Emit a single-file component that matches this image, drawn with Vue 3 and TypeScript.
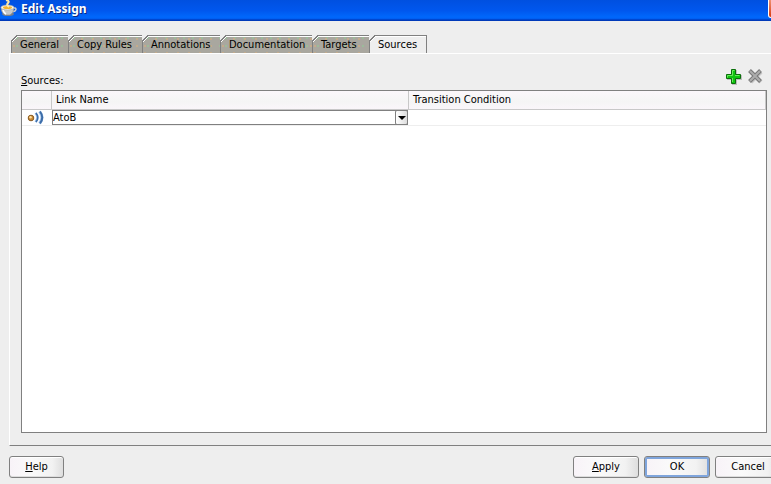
<script setup lang="ts">
import { ref } from 'vue'

const tabs: string[] = ['General', 'Copy Rules', 'Annotations', 'Documentation', 'Targets', 'Sources']
const active = ref('Sources')
const linkName = ref('AtoB')
</script>

<template>
  <div class="viewport">
    <main class="dialog">
      <header class="titlebar">
        <svg class="cup" width="17" height="17" viewBox="0 0 17 17" aria-hidden="true">
          <ellipse cx="8" cy="14" rx="6" ry="2" fill="#777d86" />
          <path d="M13 8h2q2 1 0 3l-3 1" fill="none" stroke="#c9ccd0" stroke-width="1.500" />
          <path d="M1 7h13q0 6-4 8H5Q1 13 1 7z" fill="#c5c8ca" stroke="#85888c" stroke-width=".6" />
          <path d="M3 10q1 3 3 4" stroke="#fff" stroke-width="1.500" fill="none" />
          <ellipse cx="7.500" cy="7.500" rx="6.500" ry="2.500" fill="#f3f3f0" stroke="#a9a9a3" stroke-width=".6" />
          <ellipse cx="7.500" cy="7.500" rx="4.500" ry="1.500" fill="#f2b330" />
          <path d="M6 0q4 1 2 3t1 4" fill="none" stroke="#ffe9a8" stroke-width="2" />
        </svg>
        <h1>Edit Assign</h1>
        <button class="close" type="button" aria-label="Close"></button>
      </header>

      <div class="tabs" role="tablist">
        <button
          v-for="tab in tabs"
          :key="tab"
          type="button"
          role="tab"
          class="tab"
          :class="{ active: tab === active }"
          :aria-selected="tab === active"
          @click="active = tab"
        >{{ tab }}</button>
      </div>

      <section class="panel" role="tabpanel">
        <div class="toolbar">
          <span id="sources-label" class="caption"><u>S</u>ources:</span>
          <button class="tool" type="button" aria-label="Add">
            <svg width="17" height="17" viewBox="0 0 17 17">
              <path d="M7 2h5v5h5v5h-5v5H7v-5H2V7h5z" fill="#bdbdbd" />
              <path d="M6.500 1.500h4v5h5v4h-5v5h-4v-5h-5v-4h5z" fill="#10c410" stroke="#0a6e0a" stroke-linejoin="round" />
              <path d="M7.500 14V10M2.500 9.500V7.500H7.500V2.500H9.500M10 7.500h4.500" fill="none" stroke="#6bea5c" />
            </svg>
          </button>
          <button class="tool" type="button" aria-label="Delete">
            <svg width="17" height="17" viewBox="0 0 17 17">
              <path d="M4 4l10 10M14 4L4 14" stroke="#c9c9c9" stroke-width="4" />
              <path d="M2.500 2.500l11 11M13.500 2.500l-11 11" stroke="#777" stroke-width="4" />
              <path d="M3 3l10 10M13 3L3 13" stroke="#acacac" stroke-width="2" />
            </svg>
          </button>
        </div>

        <div class="table-box">
          <table aria-labelledby="sources-label">
            <colgroup>
              <col class="col-icon" />
              <col />
              <col />
            </colgroup>
            <thead>
              <tr>
                <th></th>
                <th>Link Name</th>
                <th>Transition Condition</th>
              </tr>
            </thead>
            <tbody>
              <tr>
                <td class="icon-cell">
                  <svg width="18" height="15" viewBox="0 0 18 15" aria-hidden="true">
                    <path d="M8.500 3q4 4.500 0 9" fill="none" stroke="#9dbfe8" stroke-width="2.500" />
                    <path d="M9 3q3.500 4.500 0 9" fill="none" stroke="#3d6da8" stroke-width="1.500" />
                    <path d="M12.500 1.500q5 6 0 12" fill="none" stroke="#a9c8ec" stroke-width="3" />
                    <path d="M13 1.500q4.500 6 0 12" fill="none" stroke="#3d6da8" stroke-width="2" />
                    <circle cx="4" cy="8" r="2.800" fill="#c98a35" stroke="#8a5a20" />
                    <circle cx="3.500" cy="7.300" r="1.200" fill="#ffe0a0" />
                  </svg>
                </td>
                <td class="edit-cell">
                  <div class="combo">
                    <select v-model="linkName" aria-label="Link Name">
                      <option>AtoB</option>
                    </select>
                    <span class="arrow" aria-hidden="true">
                      <svg width="8" height="4" viewBox="0 0 8 4"><path d="M0 0h8L4 4z" fill="#000" /></svg>
                    </span>
                  </div>
                </td>
                <td></td>
              </tr>
            </tbody>
          </table>
        </div>
      </section>

      <footer class="actions">
        <button class="btn help" type="button"><u>H</u>elp</button>
        <button class="btn" type="button"><u>A</u>pply</button>
        <button class="btn primary" type="button">OK</button>
        <button class="btn" type="button">Cancel</button>
      </footer>
    </main>
  </div>
</template>

<style>
body {
  background: #eee;
}
</style>

<style scoped>
.viewport {
  min-height: 100vh;
  overflow: hidden;
  display: flex;
  background: #eee;
  color: #000;
  font: 11px/14px 'DejaVu Sans Condensed', 'Liberation Sans', sans-serif;
}

/* The dialog runs slightly past the right edge of the window. */
.dialog {
  flex: 1;
  min-width: 0;
  margin-right: -10px;
  display: flex;
  flex-direction: column;
}

button,
select {
  font: inherit;
  color: inherit;
  margin: 0;
  padding: 0;
  border: 0;
  background: none;
}

svg {
  display: block;
}

.titlebar {
  box-sizing: border-box;
  height: 21px;
  display: flex;
  gap: 4px;
  background: linear-gradient(#0050e0, #0057ee 50%, #0068fc 82%, #0060f4 88%, #003cc0 95%, #0038b4);
}

h1 {
  margin: 0;
  color: #fff;
  font: bold 12px/17px 'Noto Sans', sans-serif;
  text-shadow: 1px 1px #0a2a80;
}

.close {
  width: 13px;
  height: 18px;
  margin-left: auto;
  border: 1px solid #fff;
  border-radius: 0 0 0 3px;
  border-top: 0;
  background: linear-gradient(#f09070, #d83a10);
}

.tabs {
  display: grid;
  grid-template-columns: 58px 74px 78px 92px 57px 57px;
  padding: 14px 0 0 11px;
}

.tab {
  position: relative;
  height: 18px;
  padding-left: 8px;
  text-align: left;
  line-height: 18px;
  white-space: nowrap;
  border-top: 1px solid #808080;
  border-right: 1px solid #808080;
  box-shadow: inset 0 1px #fff;
  background:
    radial-gradient(circle at 2px 3px, #c4ab8c 1px, transparent 1px) 0 0 / 11px 7px,
    radial-gradient(circle at 5px 2px, #9cbb9a 1px, transparent 1px) 0 0 / 9px 8px,
    #a9a79f;
}

.tab:first-child {
  border-left: 1px solid #808080;
}

/* Cut top-left corner */
.tab::before {
  content: '';
  position: absolute;
  top: -1px;
  left: -1px;
  width: 7px;
  height: 7px;
  background: linear-gradient(135deg, #eee 4px, #808080 4px 5px, #fff 5px 6px, transparent 6px);
}

.tab.active {
  background: #eee;
}

.panel {
  flex: 1;
  margin-left: 9px;
  padding: 12px 14px 12px 11px;
  display: flex;
  flex-direction: column;
  border-top: 1px solid #fff;
  border-left: 1px solid #fff;
  border-bottom: 1px solid #808080;
}

.toolbar {
  height: 24px;
  display: flex;
  gap: 5px;
  padding-right: 3px;
}

.caption {
  margin-right: auto;
  padding-top: 8px;
}

u {
  text-underline-offset: 1px;
}

.tool {
  width: 17px;
  height: 17px;
  margin-top: 2px;
}

.table-box {
  flex: 1;
  border: 1px solid #808080;
  background: #fff;
}

table {
  width: 100%;
  table-layout: fixed;
  border-collapse: separate;
  border-spacing: 0;
}

.col-icon {
  width: 30px;
}

th {
  box-sizing: border-box;
  height: 19px;
  padding: 0 4px;
  text-align: left;
  font-weight: normal;
  border-right: 1px solid #c8c8c8;
  border-bottom: 1px solid #c8c8c8;
  background: linear-gradient(#fbf7fb, #f5f5f5 60%, #faf6fa);
}

td {
  height: 15px;
  padding: 0;
  border-bottom: 1px solid #eee;
}

.icon-cell svg {
  margin-left: 5px;
}

.edit-cell {
  padding-right: 1px;
}

.combo {
  position: relative;
}

select {
  display: block;
  box-sizing: border-box;
  width: 100%;
  height: 15px;
  appearance: none;
  border: 1px solid #808080;
  border-radius: 0;
  background: #fff;
}

.arrow {
  position: absolute;
  inset: 0 0 0 auto;
  box-sizing: border-box;
  width: 13px;
  display: grid;
  place-items: center;
  border: 1px solid #808080;
  border-radius: 2px;
  background: linear-gradient(90deg, #fff, #ddd);
  pointer-events: none;
}

.actions {
  display: flex;
  gap: 5px;
  padding: 10px 0 6px 9px;
}

.btn {
  box-sizing: border-box;
  width: 66px;
  height: 22px;
  border: 1px solid #808080;
  border-radius: 3px;
  background: linear-gradient(90deg, #f8f3f8, #fafafa 40%, #f2f2f2 80%, #dedede);
  box-shadow: inset 0 1px #fff, inset 0 -1px #ddd;
}

.help {
  width: 55px;
  margin-right: auto;
}

.primary {
  box-shadow: inset 0 0 0 2px #7fa5dc;
}
</style>
